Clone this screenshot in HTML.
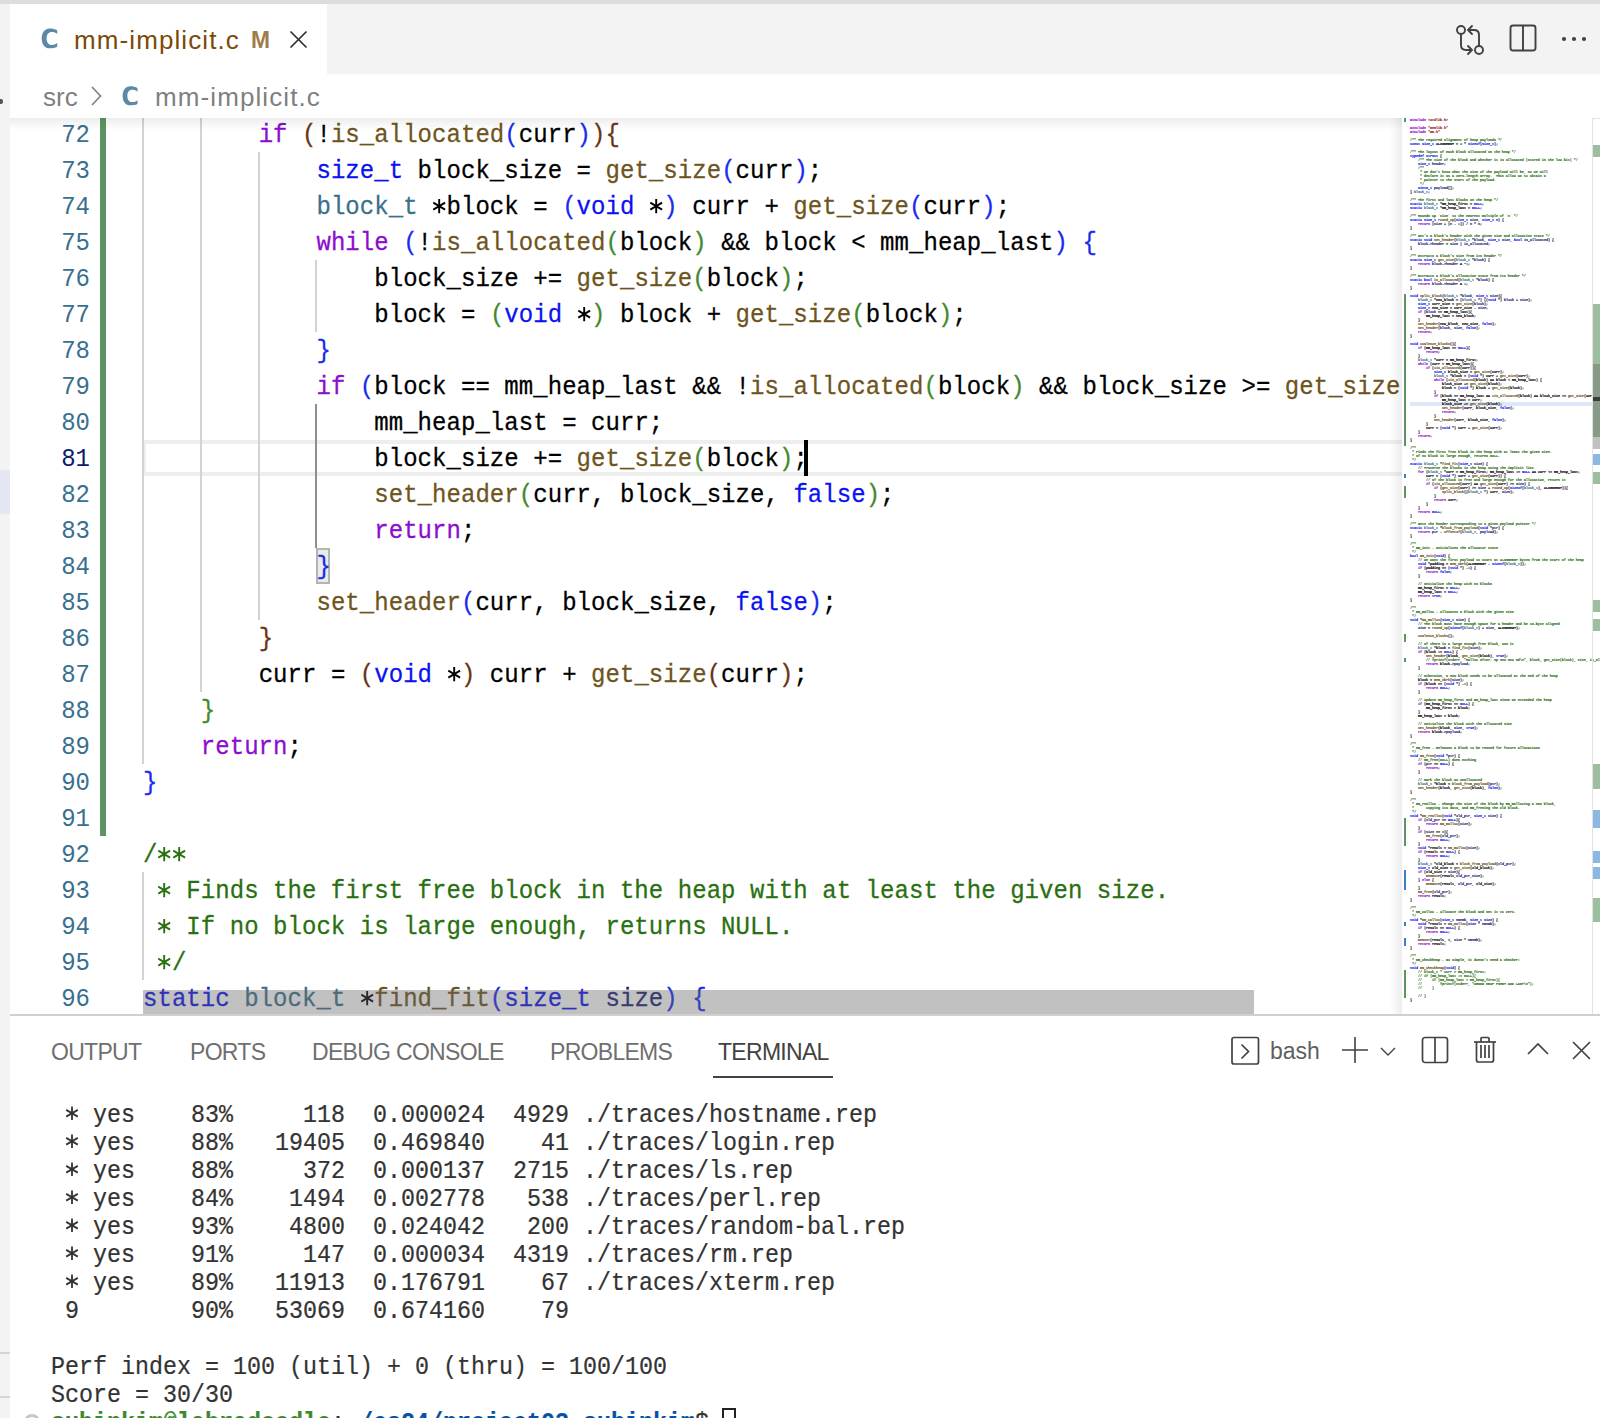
<!DOCTYPE html><html><head><meta charset="utf-8"><style>*{box-sizing:border-box}
html,body{margin:0;padding:0}
body{width:1600px;height:1418px;overflow:hidden;background:#fff;position:relative;font-family:"Liberation Sans",sans-serif}
.a{position:absolute}
#topbar{left:0;top:0;width:1600px;height:4px;background:#dddddd}
#side{left:0;top:4px;width:10px;height:1414px;background:#f3f3f3}
#tabs{left:10px;top:4px;width:1590px;height:70px;background:#f3f3f3}
#tab{left:10px;top:4px;width:317px;height:70px;background:#fff}
#crumb{left:10px;top:74px;width:1590px;height:44px;background:#fff}
#editor{left:10px;top:118px;width:1590px;height:896px;overflow:hidden;background:#fff}
.ln{position:absolute;left:0;width:90px;text-align:right;font-family:"Liberation Mono",monospace;font-size:24px;line-height:36px;height:36px;color:#386f8f;margin-top:2px;transform:scaleY(1.1);transform-origin:0 26px}
.ln.act{color:#0d1a6a}
.cl{position:absolute;left:143px;white-space:pre;font-family:"Liberation Mono",monospace;font-size:24px;line-height:36px;height:36px;color:#000;letter-spacing:0.05px;margin-top:2px;transform:scaleY(1.07);transform-origin:0 26px;-webkit-text-stroke:0.25px currentColor}
.mml{position:absolute;left:1410px;white-space:pre;font-family:"Liberation Mono",monospace;font-size:3.3333px;line-height:4px;height:4px;font-weight:bold;-webkit-text-stroke:0.12px currentColor}
.guide{position:absolute;width:2px;background:#d3d3d3}
#panelborder{left:10px;top:1014px;width:1590px;height:2px;background:#d0d0d0}
.ptab{position:absolute;top:1038px;font-size:23px;line-height:28px;color:#6f6f6f;letter-spacing:-0.7px}
.term{position:absolute;left:51px;white-space:pre;font-family:"Liberation Mono",monospace;font-size:23.333px;line-height:28px;height:28px;color:#333;transform:scaleY(1.13);transform-origin:0 20px;-webkit-text-stroke:0.2px currentColor}

.ast{display:inline-block;vertical-align:top;width:14.45px;height:36px}
.tast{display:inline-block;vertical-align:top;width:14px;height:28px}
</style></head><body><div id="topbar" class="a"></div>
<div id="side" class="a"></div>
<div class="a" style="left:0;top:470px;width:10px;height:44px;background:#e4e6f1"></div>
<div class="a" style="left:0;top:1352px;width:10px;height:2px;background:#d4d4d4"></div>
<div class="a" style="left:0;top:1396px;width:10px;height:2px;background:#d4d4d4"></div>
<div id="tabs" class="a"></div>
<div id="tab" class="a"></div>
<svg class="a" style="left:40px;top:26px" width="20" height="24" viewBox="40 26 20 24"><path d="M57.2 30.2C55 28.9 52.5 28.4 49.6 28.4C44.8 28.4 41.7 32.6 41.7 38.4C41.7 44.2 44.8 48.3 49.6 48.3C52.5 48.3 55 47.9 57.2 46.8L57.2 43C55.7 44.3 53.8 44.9 51.8 44.9C48.6 44.9 46.6 42.3 46.6 38.4C46.6 34.5 48.6 32.1 51.8 32.1C53.8 32.1 55.7 32.7 57.2 34Z" fill="#5b89a6"/></svg>
<div class="a" style="left:74px;top:25px;font-size:26px;color:#7a4a08;line-height:30px;letter-spacing:1.1px">mm-implicit.c</div>
<div class="a" style="left:251px;top:25px;font-size:24px;font-weight:bold;color:#9f7d4b;line-height:30px;transform:scaleX(0.95);transform-origin:0 0">M</div>
<svg class="a" style="left:289px;top:30px" width="19" height="19" viewBox="0 0 19 19"><path d="M1.5 1.5L17.5 17.5M17.5 1.5L1.5 17.5" stroke="#2e2e2e" stroke-width="1.7" fill="none"/></svg>
<svg class="a" style="left:1450px;top:18px" width="40" height="42" viewBox="0 0 40 42">
<g stroke="#424242" stroke-width="1.9" fill="none" stroke-linecap="round">
<circle cx="11" cy="12" r="4"/><circle cx="29" cy="32" r="4"/>
<path d="M11 16V27Q11 32 16 32H21"/><path d="M18 28L22 32L18 36"/>
<path d="M29 28V17Q29 12 24 12H19"/><path d="M22 8L18 12L22 16"/>
</g></svg>
<svg class="a" style="left:1508px;top:23px" width="30" height="30" viewBox="0 0 30 30"><g stroke="#424242" stroke-width="1.9" fill="none"><rect x="2.5" y="2.5" width="25" height="25" rx="2.5"/><path d="M15 2.5V27.5"/></g></svg>
<svg class="a" style="left:1558px;top:33px" width="32" height="12" viewBox="0 0 32 12"><g fill="#424242"><circle cx="6" cy="6" r="2.1"/><circle cx="16" cy="6" r="2.1"/><circle cx="26" cy="6" r="2.1"/></g></svg>
<div id="crumb" class="a"></div>
<div class="a" style="left:0;top:99px;width:3px;height:5px;background:#555;border-radius:0 2px 2px 0"></div>
<div class="a" style="left:43px;top:82px;font-size:26px;color:#7f7f7f;line-height:30px">src</div>
<svg class="a" style="left:88px;top:84px" width="16" height="24" viewBox="0 0 16 24"><path d="M4 3L12.5 12L4 21" stroke="#7f7f7f" stroke-width="1.6" fill="none"/></svg>
<svg class="a" style="left:121.4px;top:83.5px" width="19.2" height="23" viewBox="40 26 20 24"><path d="M57.2 30.2C55 28.9 52.5 28.4 49.6 28.4C44.8 28.4 41.7 32.6 41.7 38.4C41.7 44.2 44.8 48.3 49.6 48.3C52.5 48.3 55 47.9 57.2 46.8L57.2 43C55.7 44.3 53.8 44.9 51.8 44.9C48.6 44.9 46.6 42.3 46.6 38.4C46.6 34.5 48.6 32.1 51.8 32.1C53.8 32.1 55.7 32.7 57.2 34Z" fill="#5b89a6"/></svg>
<div class="a" style="left:155px;top:82px;font-size:26px;color:#7f7f7f;line-height:30px;letter-spacing:1.1px">mm-implicit.c</div>
<div id="editor" class="a">
<div style="position:absolute;left:-10px;top:-118px;width:1600px;height:1418px">
<div class="a" style="left:100px;top:118px;width:6px;height:718px;background:#5d9461"></div>
<div class="a" style="left:142px;top:440px;width:1270px;height:36px;border:4px solid #eeeeee"></div>
<div class="guide" style="left:142px;top:116px;height:36px;background:#d3d3d3"></div>
<div class="guide" style="left:200px;top:116px;height:36px;background:#d3d3d3"></div>
<div class="guide" style="left:142px;top:152px;height:36px;background:#d3d3d3"></div>
<div class="guide" style="left:200px;top:152px;height:36px;background:#d3d3d3"></div>
<div class="guide" style="left:258px;top:152px;height:36px;background:#d3d3d3"></div>
<div class="guide" style="left:142px;top:188px;height:36px;background:#d3d3d3"></div>
<div class="guide" style="left:200px;top:188px;height:36px;background:#d3d3d3"></div>
<div class="guide" style="left:258px;top:188px;height:36px;background:#d3d3d3"></div>
<div class="guide" style="left:142px;top:224px;height:36px;background:#d3d3d3"></div>
<div class="guide" style="left:200px;top:224px;height:36px;background:#d3d3d3"></div>
<div class="guide" style="left:258px;top:224px;height:36px;background:#d3d3d3"></div>
<div class="guide" style="left:142px;top:260px;height:36px;background:#d3d3d3"></div>
<div class="guide" style="left:200px;top:260px;height:36px;background:#d3d3d3"></div>
<div class="guide" style="left:258px;top:260px;height:36px;background:#d3d3d3"></div>
<div class="guide" style="left:315px;top:260px;height:36px;background:#d3d3d3"></div>
<div class="guide" style="left:142px;top:296px;height:36px;background:#d3d3d3"></div>
<div class="guide" style="left:200px;top:296px;height:36px;background:#d3d3d3"></div>
<div class="guide" style="left:258px;top:296px;height:36px;background:#d3d3d3"></div>
<div class="guide" style="left:315px;top:296px;height:36px;background:#d3d3d3"></div>
<div class="guide" style="left:142px;top:332px;height:36px;background:#d3d3d3"></div>
<div class="guide" style="left:200px;top:332px;height:36px;background:#d3d3d3"></div>
<div class="guide" style="left:258px;top:332px;height:36px;background:#d3d3d3"></div>
<div class="guide" style="left:142px;top:368px;height:36px;background:#d3d3d3"></div>
<div class="guide" style="left:200px;top:368px;height:36px;background:#d3d3d3"></div>
<div class="guide" style="left:258px;top:368px;height:36px;background:#d3d3d3"></div>
<div class="guide" style="left:142px;top:404px;height:36px;background:#d3d3d3"></div>
<div class="guide" style="left:200px;top:404px;height:36px;background:#d3d3d3"></div>
<div class="guide" style="left:258px;top:404px;height:36px;background:#d3d3d3"></div>
<div class="guide" style="left:315px;top:404px;height:36px;background:#8f8f8f"></div>
<div class="guide" style="left:142px;top:440px;height:36px;background:#d3d3d3"></div>
<div class="guide" style="left:200px;top:440px;height:36px;background:#d3d3d3"></div>
<div class="guide" style="left:258px;top:440px;height:36px;background:#d3d3d3"></div>
<div class="guide" style="left:315px;top:440px;height:36px;background:#8f8f8f"></div>
<div class="guide" style="left:142px;top:476px;height:36px;background:#d3d3d3"></div>
<div class="guide" style="left:200px;top:476px;height:36px;background:#d3d3d3"></div>
<div class="guide" style="left:258px;top:476px;height:36px;background:#d3d3d3"></div>
<div class="guide" style="left:315px;top:476px;height:36px;background:#8f8f8f"></div>
<div class="guide" style="left:142px;top:512px;height:36px;background:#d3d3d3"></div>
<div class="guide" style="left:200px;top:512px;height:36px;background:#d3d3d3"></div>
<div class="guide" style="left:258px;top:512px;height:36px;background:#d3d3d3"></div>
<div class="guide" style="left:315px;top:512px;height:36px;background:#8f8f8f"></div>
<div class="guide" style="left:142px;top:548px;height:36px;background:#d3d3d3"></div>
<div class="guide" style="left:200px;top:548px;height:36px;background:#d3d3d3"></div>
<div class="guide" style="left:258px;top:548px;height:36px;background:#d3d3d3"></div>
<div class="guide" style="left:142px;top:584px;height:36px;background:#d3d3d3"></div>
<div class="guide" style="left:200px;top:584px;height:36px;background:#d3d3d3"></div>
<div class="guide" style="left:258px;top:584px;height:36px;background:#d3d3d3"></div>
<div class="guide" style="left:142px;top:620px;height:36px;background:#d3d3d3"></div>
<div class="guide" style="left:200px;top:620px;height:36px;background:#d3d3d3"></div>
<div class="guide" style="left:142px;top:656px;height:36px;background:#d3d3d3"></div>
<div class="guide" style="left:200px;top:656px;height:36px;background:#d3d3d3"></div>
<div class="guide" style="left:142px;top:692px;height:36px;background:#d3d3d3"></div>
<div class="guide" style="left:142px;top:728px;height:36px;background:#d3d3d3"></div>
<div class="guide" style="left:142px;top:872px;height:36px;background:#d3d3d3"></div>
<div class="guide" style="left:142px;top:908px;height:36px;background:#d3d3d3"></div>
<div class="guide" style="left:142px;top:944px;height:36px;background:#d3d3d3"></div>
<div class="a" style="left:316px;top:548px;width:14px;height:36px;border:2px solid #b4b4b4;background:#e8ede5"></div>
<div class="a" style="left:0;top:0;width:1402px;height:1418px;overflow:hidden">
<div class="ln" style="top:116px">72</div>
<div class="cl" style="top:116px">        <span style="color:#8c0ccf">if</span> <span style="color:#6b3214">(</span><span style="color:#000000">!</span><span style="color:#6e5420">is_allocated</span><span style="color:#1a2aee">(</span><span style="color:#000000">curr</span><span style="color:#1a2aee">)</span><span style="color:#6b3214">)</span><span style="color:#6b3214">{</span></div>
<div class="ln" style="top:152px">73</div>
<div class="cl" style="top:152px">            <span style="color:#0b12f2">size_t</span> <span style="color:#000000">block_size</span> <span style="color:#000000">=</span> <span style="color:#6e5420">get_size</span><span style="color:#1a2aee">(</span><span style="color:#000000">curr</span><span style="color:#1a2aee">)</span><span style="color:#000000">;</span></div>
<div class="ln" style="top:188px">74</div>
<div class="cl" style="top:188px">            <span style="color:#3b708c">block_t</span> <svg class="ast" width="14.45" height="36" viewBox="0 0 14.45 36"><path d="M7.2 10.05V23.55M1.3 13.45L13.1 20.15M1.3 20.15L13.1 13.45" stroke="#000000" stroke-width="1.9"/></svg><span style="color:#000000">block</span> <span style="color:#000000">=</span> <span style="color:#1a2aee">(</span><span style="color:#0b12f2">void</span> <svg class="ast" width="14.45" height="36" viewBox="0 0 14.45 36"><path d="M7.2 10.05V23.55M1.3 13.45L13.1 20.15M1.3 20.15L13.1 13.45" stroke="#000000" stroke-width="1.9"/></svg><span style="color:#1a2aee">)</span> <span style="color:#000000">curr</span> <span style="color:#000000">+</span> <span style="color:#6e5420">get_size</span><span style="color:#1a2aee">(</span><span style="color:#000000">curr</span><span style="color:#1a2aee">)</span><span style="color:#000000">;</span></div>
<div class="ln" style="top:224px">75</div>
<div class="cl" style="top:224px">            <span style="color:#8c0ccf">while</span> <span style="color:#1a2aee">(</span><span style="color:#000000">!</span><span style="color:#6e5420">is_allocated</span><span style="color:#3f8a2e">(</span><span style="color:#000000">block</span><span style="color:#3f8a2e">)</span> <span style="color:#000000">&amp;</span><span style="color:#000000">&amp;</span> <span style="color:#000000">block</span> <span style="color:#000000">&lt;</span> <span style="color:#000000">mm_heap_last</span><span style="color:#1a2aee">)</span> <span style="color:#1a2aee">{</span></div>
<div class="ln" style="top:260px">76</div>
<div class="cl" style="top:260px">                <span style="color:#000000">block_size</span> <span style="color:#000000">+</span><span style="color:#000000">=</span> <span style="color:#6e5420">get_size</span><span style="color:#3f8a2e">(</span><span style="color:#000000">block</span><span style="color:#3f8a2e">)</span><span style="color:#000000">;</span></div>
<div class="ln" style="top:296px">77</div>
<div class="cl" style="top:296px">                <span style="color:#000000">block</span> <span style="color:#000000">=</span> <span style="color:#3f8a2e">(</span><span style="color:#0b12f2">void</span> <svg class="ast" width="14.45" height="36" viewBox="0 0 14.45 36"><path d="M7.2 10.05V23.55M1.3 13.45L13.1 20.15M1.3 20.15L13.1 13.45" stroke="#000000" stroke-width="1.9"/></svg><span style="color:#3f8a2e">)</span> <span style="color:#000000">block</span> <span style="color:#000000">+</span> <span style="color:#6e5420">get_size</span><span style="color:#3f8a2e">(</span><span style="color:#000000">block</span><span style="color:#3f8a2e">)</span><span style="color:#000000">;</span></div>
<div class="ln" style="top:332px">78</div>
<div class="cl" style="top:332px">            <span style="color:#1a2aee">}</span></div>
<div class="ln" style="top:368px">79</div>
<div class="cl" style="top:368px">            <span style="color:#8c0ccf">if</span> <span style="color:#1a2aee">(</span><span style="color:#000000">block</span> <span style="color:#000000">=</span><span style="color:#000000">=</span> <span style="color:#000000">mm_heap_last</span> <span style="color:#000000">&amp;</span><span style="color:#000000">&amp;</span> <span style="color:#000000">!</span><span style="color:#6e5420">is_allocated</span><span style="color:#3f8a2e">(</span><span style="color:#000000">block</span><span style="color:#3f8a2e">)</span> <span style="color:#000000">&amp;</span><span style="color:#000000">&amp;</span> <span style="color:#000000">block_size</span> <span style="color:#000000">&gt;</span><span style="color:#000000">=</span> <span style="color:#6e5420">get_size</span><span style="color:#3f8a2e">(</span><span style="color:#000000">curr</span><span style="color:#3f8a2e">)</span><span style="color:#1a2aee">)</span><span style="color:#1a2aee">{</span></div>
<div class="ln" style="top:404px">80</div>
<div class="cl" style="top:404px">                <span style="color:#000000">mm_heap_last</span> <span style="color:#000000">=</span> <span style="color:#000000">curr</span><span style="color:#000000">;</span></div>
<div class="ln act" style="top:440px">81</div>
<div class="cl" style="top:440px">                <span style="color:#000000">block_size</span> <span style="color:#000000">+</span><span style="color:#000000">=</span> <span style="color:#6e5420">get_size</span><span style="color:#3f8a2e">(</span><span style="color:#000000">block</span><span style="color:#3f8a2e">)</span><span style="color:#000000">;</span></div>
<div class="ln" style="top:476px">82</div>
<div class="cl" style="top:476px">                <span style="color:#6e5420">set_header</span><span style="color:#3f8a2e">(</span><span style="color:#000000">curr</span><span style="color:#000000">,</span> <span style="color:#000000">block_size</span><span style="color:#000000">,</span> <span style="color:#0b12f2">false</span><span style="color:#3f8a2e">)</span><span style="color:#000000">;</span></div>
<div class="ln" style="top:512px">83</div>
<div class="cl" style="top:512px">                <span style="color:#8c0ccf">return</span><span style="color:#000000">;</span></div>
<div class="ln" style="top:548px">84</div>
<div class="cl" style="top:548px">            <span style="color:#1a2aee">}</span></div>
<div class="ln" style="top:584px">85</div>
<div class="cl" style="top:584px">            <span style="color:#6e5420">set_header</span><span style="color:#1a2aee">(</span><span style="color:#000000">curr</span><span style="color:#000000">,</span> <span style="color:#000000">block_size</span><span style="color:#000000">,</span> <span style="color:#0b12f2">false</span><span style="color:#1a2aee">)</span><span style="color:#000000">;</span></div>
<div class="ln" style="top:620px">86</div>
<div class="cl" style="top:620px">        <span style="color:#6b3214">}</span></div>
<div class="ln" style="top:656px">87</div>
<div class="cl" style="top:656px">        <span style="color:#000000">curr</span> <span style="color:#000000">=</span> <span style="color:#6b3214">(</span><span style="color:#0b12f2">void</span> <svg class="ast" width="14.45" height="36" viewBox="0 0 14.45 36"><path d="M7.2 10.05V23.55M1.3 13.45L13.1 20.15M1.3 20.15L13.1 13.45" stroke="#000000" stroke-width="1.9"/></svg><span style="color:#6b3214">)</span> <span style="color:#000000">curr</span> <span style="color:#000000">+</span> <span style="color:#6e5420">get_size</span><span style="color:#6b3214">(</span><span style="color:#000000">curr</span><span style="color:#6b3214">)</span><span style="color:#000000">;</span></div>
<div class="ln" style="top:692px">88</div>
<div class="cl" style="top:692px">    <span style="color:#3f8a2e">}</span></div>
<div class="ln" style="top:728px">89</div>
<div class="cl" style="top:728px">    <span style="color:#8c0ccf">return</span><span style="color:#000000">;</span></div>
<div class="ln" style="top:764px">90</div>
<div class="cl" style="top:764px"><span style="color:#1a2aee">}</span></div>
<div class="ln" style="top:800px">91</div>
<div class="cl" style="top:800px"></div>
<div class="ln" style="top:836px">92</div>
<div class="cl" style="top:836px"><span style="color:#2a7010">/</span><svg class="ast" width="14.45" height="36" viewBox="0 0 14.45 36"><path d="M7.2 10.05V23.55M1.3 13.45L13.1 20.15M1.3 20.15L13.1 13.45" stroke="#2a7010" stroke-width="1.9"/></svg><svg class="ast" width="14.45" height="36" viewBox="0 0 14.45 36"><path d="M7.2 10.05V23.55M1.3 13.45L13.1 20.15M1.3 20.15L13.1 13.45" stroke="#2a7010" stroke-width="1.9"/></svg></div>
<div class="ln" style="top:872px">93</div>
<div class="cl" style="top:872px"><span style="color:#2a7010"> </span><svg class="ast" width="14.45" height="36" viewBox="0 0 14.45 36"><path d="M7.2 10.05V23.55M1.3 13.45L13.1 20.15M1.3 20.15L13.1 13.45" stroke="#2a7010" stroke-width="1.9"/></svg><span style="color:#2a7010"> Finds the first free block in the heap with at least the given size.</span></div>
<div class="ln" style="top:908px">94</div>
<div class="cl" style="top:908px"><span style="color:#2a7010"> </span><svg class="ast" width="14.45" height="36" viewBox="0 0 14.45 36"><path d="M7.2 10.05V23.55M1.3 13.45L13.1 20.15M1.3 20.15L13.1 13.45" stroke="#2a7010" stroke-width="1.9"/></svg><span style="color:#2a7010"> If no block is large enough, returns NULL.</span></div>
<div class="ln" style="top:944px">95</div>
<div class="cl" style="top:944px"><span style="color:#2a7010"> </span><svg class="ast" width="14.45" height="36" viewBox="0 0 14.45 36"><path d="M7.2 10.05V23.55M1.3 13.45L13.1 20.15M1.3 20.15L13.1 13.45" stroke="#2a7010" stroke-width="1.9"/></svg><span style="color:#2a7010">/</span></div>
<div class="ln" style="top:980px">96</div>
<div class="cl" style="top:980px"><span style="color:#0b12f2">static</span> <span style="color:#3b708c">block_t</span> <svg class="ast" width="14.45" height="36" viewBox="0 0 14.45 36"><path d="M7.2 10.05V23.55M1.3 13.45L13.1 20.15M1.3 20.15L13.1 13.45" stroke="#000000" stroke-width="1.9"/></svg><span style="color:#6e5420">find_fit</span><span style="color:#1a2aee">(</span><span style="color:#0b12f2">size_t</span> <span style="color:#1b1f78">size</span><span style="color:#1a2aee">)</span> <span style="color:#1a2aee">{</span></div>
</div>
<div class="a" style="left:804px;top:440px;width:4px;height:36px;background:#000"></div>
<div class="a" style="left:143px;top:990px;width:1111px;height:24px;background:rgba(100,100,100,0.4)"></div>
<div class="a" style="left:10px;top:118px;width:1392px;height:12px;background:linear-gradient(to bottom,rgba(0,0,0,0.07),rgba(0,0,0,0))"></div>
<div class="a" style="left:1390px;top:118px;width:12px;height:896px;background:linear-gradient(to right,rgba(0,0,0,0),rgba(0,0,0,0.07))"></div>
<div class="a" style="left:1402px;top:118px;width:190px;height:896px;background:#fff"></div>
<div class="a" style="left:1404px;top:118px;width:2px;height:4px;background:#5d9461"></div>
<div class="a" style="left:1404px;top:294px;width:2px;height:152px;background:#5d9461"></div>
<div class="a" style="left:1404px;top:474px;width:2px;height:4px;background:#3b7fc4"></div>
<div class="a" style="left:1404px;top:486px;width:2px;height:12px;background:#5d9461"></div>
<div class="a" style="left:1404px;top:634px;width:2px;height:8px;background:#5d9461"></div>
<div class="a" style="left:1404px;top:658px;width:2px;height:4px;background:#5d9461"></div>
<div class="a" style="left:1404px;top:818px;width:2px;height:28px;background:#5d9461"></div>
<div class="a" style="left:1404px;top:870px;width:2px;height:20px;background:#3b7fc4"></div>
<div class="a" style="left:1404px;top:922px;width:2px;height:4px;background:#3b7fc4"></div>
<div class="a" style="left:1404px;top:938px;width:2px;height:8px;background:#3b7fc4"></div>
<div class="a" style="left:1404px;top:970px;width:2px;height:28px;background:#5d9461"></div>
<div class="a" style="left:1410px;top:402px;width:182px;height:4px;background:#dde9f8"></div>
<div class="mml" style="top:118px"><span style="color:#8c0ccf">#include</span> <span style="color:#8e2418">&lt;stdlib.h&gt;</span></div>
<div class="mml" style="top:126px"><span style="color:#8c0ccf">#include</span> <span style="color:#8e2418">&quot;memlib.h&quot;</span></div>
<div class="mml" style="top:130px"><span style="color:#8c0ccf">#include</span> <span style="color:#8e2418">&quot;mm.h&quot;</span></div>
<div class="mml" style="top:138px"><span style="color:#2a7010">/** The required alignment of heap payloads */</span></div>
<div class="mml" style="top:142px"><span style="color:#0b12f2">const</span> <span style="color:#0b12f2">size_t</span> <span style="color:#000000">ALIGNMENT</span> <span style="color:#000000">=</span> <span style="color:#2f7a55">2</span> <span style="color:#000000">*</span> <span style="color:#0b12f2">sizeof</span><span style="color:#000000">(</span><span style="color:#0b12f2">size_t</span><span style="color:#000000">)</span><span style="color:#000000">;</span></div>
<div class="mml" style="top:150px"><span style="color:#2a7010">/** The layout of each block allocated on the heap */</span></div>
<div class="mml" style="top:154px"><span style="color:#0b12f2">typedef</span> <span style="color:#0b12f2">struct</span> <span style="color:#000000">{</span></div>
<div class="mml" style="top:158px">    <span style="color:#2a7010">/** The size of the block and whether it is allocated (stored in the low bit) */</span></div>
<div class="mml" style="top:162px">    <span style="color:#0b12f2">size_t</span> <span style="color:#1b1f78">header</span><span style="color:#000000">;</span></div>
<div class="mml" style="top:166px">    <span style="color:#2a7010">/**</span></div>
<div class="mml" style="top:170px"><span style="color:#2a7010">     * We don&#x27;t know what the size of the payload will be, so we will</span></div>
<div class="mml" style="top:174px"><span style="color:#2a7010">     * declare it as a zero-length array.  This allow us to obtain a</span></div>
<div class="mml" style="top:178px"><span style="color:#2a7010">     * pointer to the start of the payload.</span></div>
<div class="mml" style="top:182px"><span style="color:#2a7010">     */</span></div>
<div class="mml" style="top:186px">    <span style="color:#0b12f2">uint8_t</span> <span style="color:#1b1f78">payload</span><span style="color:#000000">[</span><span style="color:#000000">]</span><span style="color:#000000">;</span></div>
<div class="mml" style="top:190px"><span style="color:#000000">}</span> <span style="color:#3b708c">block_t</span><span style="color:#000000">;</span></div>
<div class="mml" style="top:198px"><span style="color:#2a7010">/** The first and last blocks on the heap */</span></div>
<div class="mml" style="top:202px"><span style="color:#0b12f2">static</span> <span style="color:#3b708c">block_t</span> <span style="color:#000000">*</span><span style="color:#000000">mm_heap_first</span> <span style="color:#000000">=</span> <span style="color:#0b12f2">NULL</span><span style="color:#000000">;</span></div>
<div class="mml" style="top:206px"><span style="color:#0b12f2">static</span> <span style="color:#3b708c">block_t</span> <span style="color:#000000">*</span><span style="color:#000000">mm_heap_last</span> <span style="color:#000000">=</span> <span style="color:#0b12f2">NULL</span><span style="color:#000000">;</span></div>
<div class="mml" style="top:214px"><span style="color:#2a7010">/** Rounds up `size` to the nearest multiple of `n` */</span></div>
<div class="mml" style="top:218px"><span style="color:#0b12f2">static</span> <span style="color:#0b12f2">size_t</span> <span style="color:#6e5420">round_up</span><span style="color:#000000">(</span><span style="color:#0b12f2">size_t</span> <span style="color:#1b1f78">size</span><span style="color:#000000">,</span> <span style="color:#0b12f2">size_t</span> <span style="color:#1b1f78">n</span><span style="color:#000000">)</span> <span style="color:#000000">{</span></div>
<div class="mml" style="top:222px">    <span style="color:#8c0ccf">return</span> <span style="color:#000000">(</span><span style="color:#1b1f78">size</span> <span style="color:#000000">+</span> <span style="color:#000000">(</span><span style="color:#1b1f78">n</span> <span style="color:#000000">-</span> <span style="color:#2f7a55">1</span><span style="color:#000000">)</span><span style="color:#000000">)</span> <span style="color:#000000">/</span> <span style="color:#1b1f78">n</span> <span style="color:#000000">*</span> <span style="color:#1b1f78">n</span><span style="color:#000000">;</span></div>
<div class="mml" style="top:226px"><span style="color:#000000">}</span></div>
<div class="mml" style="top:234px"><span style="color:#2a7010">/** Set&#x27;s a block&#x27;s header with the given size and allocation state */</span></div>
<div class="mml" style="top:238px"><span style="color:#0b12f2">static</span> <span style="color:#0b12f2">void</span> <span style="color:#6e5420">set_header</span><span style="color:#000000">(</span><span style="color:#3b708c">block_t</span> <span style="color:#000000">*</span><span style="color:#1b1f78">block</span><span style="color:#000000">,</span> <span style="color:#0b12f2">size_t</span> <span style="color:#1b1f78">size</span><span style="color:#000000">,</span> <span style="color:#0b12f2">bool</span> <span style="color:#1b1f78">is_allocated</span><span style="color:#000000">)</span> <span style="color:#000000">{</span></div>
<div class="mml" style="top:242px">    <span style="color:#1b1f78">block</span><span style="color:#000000">-</span><span style="color:#000000">&gt;</span><span style="color:#1b1f78">header</span> <span style="color:#000000">=</span> <span style="color:#1b1f78">size</span> <span style="color:#000000">|</span> <span style="color:#1b1f78">is_allocated</span><span style="color:#000000">;</span></div>
<div class="mml" style="top:246px"><span style="color:#000000">}</span></div>
<div class="mml" style="top:254px"><span style="color:#2a7010">/** Extracts a block&#x27;s size from its header */</span></div>
<div class="mml" style="top:258px"><span style="color:#0b12f2">static</span> <span style="color:#0b12f2">size_t</span> <span style="color:#6e5420">get_size</span><span style="color:#000000">(</span><span style="color:#3b708c">block_t</span> <span style="color:#000000">*</span><span style="color:#1b1f78">block</span><span style="color:#000000">)</span> <span style="color:#000000">{</span></div>
<div class="mml" style="top:262px">    <span style="color:#8c0ccf">return</span> <span style="color:#1b1f78">block</span><span style="color:#000000">-</span><span style="color:#000000">&gt;</span><span style="color:#1b1f78">header</span> <span style="color:#000000">&amp;</span> <span style="color:#000000">~</span><span style="color:#2f7a55">1</span><span style="color:#000000">;</span></div>
<div class="mml" style="top:266px"><span style="color:#000000">}</span></div>
<div class="mml" style="top:274px"><span style="color:#2a7010">/** Extracts a block&#x27;s allocation state from its header */</span></div>
<div class="mml" style="top:278px"><span style="color:#0b12f2">static</span> <span style="color:#0b12f2">bool</span> <span style="color:#6e5420">is_allocated</span><span style="color:#000000">(</span><span style="color:#3b708c">block_t</span> <span style="color:#000000">*</span><span style="color:#1b1f78">block</span><span style="color:#000000">)</span> <span style="color:#000000">{</span></div>
<div class="mml" style="top:282px">    <span style="color:#8c0ccf">return</span> <span style="color:#1b1f78">block</span><span style="color:#000000">-</span><span style="color:#000000">&gt;</span><span style="color:#1b1f78">header</span> <span style="color:#000000">&amp;</span> <span style="color:#2f7a55">1</span><span style="color:#000000">;</span></div>
<div class="mml" style="top:286px"><span style="color:#000000">}</span></div>
<div class="mml" style="top:294px"><span style="color:#0b12f2">void</span> <span style="color:#6e5420">split_block</span><span style="color:#000000">(</span><span style="color:#3b708c">block_t</span> <span style="color:#000000">*</span><span style="color:#1b1f78">block</span><span style="color:#000000">,</span> <span style="color:#0b12f2">size_t</span> <span style="color:#1b1f78">size</span><span style="color:#000000">)</span><span style="color:#000000">{</span></div>
<div class="mml" style="top:298px">    <span style="color:#3b708c">block_t</span> <span style="color:#000000">*</span><span style="color:#000000">new_block</span> <span style="color:#000000">=</span> <span style="color:#000000">(</span><span style="color:#3b708c">block_t</span> <span style="color:#000000">*</span><span style="color:#000000">)</span> <span style="color:#000000">(</span><span style="color:#000000">(</span><span style="color:#0b12f2">void</span> <span style="color:#000000">*</span><span style="color:#000000">)</span> <span style="color:#1b1f78">block</span> <span style="color:#000000">+</span> <span style="color:#1b1f78">size</span><span style="color:#000000">)</span><span style="color:#000000">;</span></div>
<div class="mml" style="top:302px">    <span style="color:#0b12f2">size_t</span> <span style="color:#000000">curr_size</span> <span style="color:#000000">=</span> <span style="color:#6e5420">get_size</span><span style="color:#000000">(</span><span style="color:#1b1f78">block</span><span style="color:#000000">)</span><span style="color:#000000">;</span></div>
<div class="mml" style="top:306px">    <span style="color:#0b12f2">size_t</span> <span style="color:#000000">new_size</span> <span style="color:#000000">=</span> <span style="color:#000000">curr_size</span> <span style="color:#000000">-</span> <span style="color:#1b1f78">size</span><span style="color:#000000">;</span></div>
<div class="mml" style="top:310px">    <span style="color:#8c0ccf">if</span> <span style="color:#000000">(</span><span style="color:#1b1f78">block</span> <span style="color:#000000">=</span><span style="color:#000000">=</span> <span style="color:#000000">mm_heap_last</span><span style="color:#000000">)</span><span style="color:#000000">{</span></div>
<div class="mml" style="top:314px">        <span style="color:#000000">mm_heap_last</span> <span style="color:#000000">=</span> <span style="color:#000000">new_block</span><span style="color:#000000">;</span></div>
<div class="mml" style="top:318px">    <span style="color:#000000">}</span></div>
<div class="mml" style="top:322px">    <span style="color:#6e5420">set_header</span><span style="color:#000000">(</span><span style="color:#000000">new_block</span><span style="color:#000000">,</span> <span style="color:#000000">new_size</span><span style="color:#000000">,</span> <span style="color:#0b12f2">false</span><span style="color:#000000">)</span><span style="color:#000000">;</span></div>
<div class="mml" style="top:326px">    <span style="color:#6e5420">set_header</span><span style="color:#000000">(</span><span style="color:#1b1f78">block</span><span style="color:#000000">,</span> <span style="color:#1b1f78">size</span><span style="color:#000000">,</span> <span style="color:#0b12f2">false</span><span style="color:#000000">)</span><span style="color:#000000">;</span></div>
<div class="mml" style="top:330px">    <span style="color:#8c0ccf">return</span><span style="color:#000000">;</span></div>
<div class="mml" style="top:334px"><span style="color:#000000">}</span></div>
<div class="mml" style="top:342px"><span style="color:#0b12f2">void</span> <span style="color:#6e5420">coalesce_blocks</span><span style="color:#000000">(</span><span style="color:#000000">)</span><span style="color:#000000">{</span></div>
<div class="mml" style="top:346px">    <span style="color:#8c0ccf">if</span> <span style="color:#000000">(</span><span style="color:#000000">mm_heap_last</span> <span style="color:#000000">=</span><span style="color:#000000">=</span> <span style="color:#0b12f2">NULL</span><span style="color:#000000">)</span><span style="color:#000000">{</span></div>
<div class="mml" style="top:350px">        <span style="color:#8c0ccf">return</span><span style="color:#000000">;</span></div>
<div class="mml" style="top:354px">    <span style="color:#000000">}</span></div>
<div class="mml" style="top:358px">    <span style="color:#3b708c">block_t</span> <span style="color:#000000">*</span><span style="color:#000000">curr</span> <span style="color:#000000">=</span> <span style="color:#000000">mm_heap_first</span><span style="color:#000000">;</span></div>
<div class="mml" style="top:362px">    <span style="color:#8c0ccf">while</span> <span style="color:#000000">(</span><span style="color:#000000">curr</span> <span style="color:#000000">&lt;</span> <span style="color:#000000">mm_heap_last</span><span style="color:#000000">)</span><span style="color:#000000">{</span></div>
<div class="mml" style="top:366px">        <span style="color:#8c0ccf">if</span> <span style="color:#000000">(</span><span style="color:#000000">!</span><span style="color:#6e5420">is_allocated</span><span style="color:#000000">(</span><span style="color:#000000">curr</span><span style="color:#000000">)</span><span style="color:#000000">)</span><span style="color:#000000">{</span></div>
<div class="mml" style="top:370px">            <span style="color:#0b12f2">size_t</span> <span style="color:#000000">block_size</span> <span style="color:#000000">=</span> <span style="color:#6e5420">get_size</span><span style="color:#000000">(</span><span style="color:#000000">curr</span><span style="color:#000000">)</span><span style="color:#000000">;</span></div>
<div class="mml" style="top:374px">            <span style="color:#3b708c">block_t</span> <span style="color:#000000">*</span><span style="color:#000000">block</span> <span style="color:#000000">=</span> <span style="color:#000000">(</span><span style="color:#0b12f2">void</span> <span style="color:#000000">*</span><span style="color:#000000">)</span> <span style="color:#000000">curr</span> <span style="color:#000000">+</span> <span style="color:#6e5420">get_size</span><span style="color:#000000">(</span><span style="color:#000000">curr</span><span style="color:#000000">)</span><span style="color:#000000">;</span></div>
<div class="mml" style="top:378px">            <span style="color:#8c0ccf">while</span> <span style="color:#000000">(</span><span style="color:#000000">!</span><span style="color:#6e5420">is_allocated</span><span style="color:#000000">(</span><span style="color:#000000">block</span><span style="color:#000000">)</span> <span style="color:#000000">&amp;</span><span style="color:#000000">&amp;</span> <span style="color:#000000">block</span> <span style="color:#000000">&lt;</span> <span style="color:#000000">mm_heap_last</span><span style="color:#000000">)</span> <span style="color:#000000">{</span></div>
<div class="mml" style="top:382px">                <span style="color:#000000">block_size</span> <span style="color:#000000">+</span><span style="color:#000000">=</span> <span style="color:#6e5420">get_size</span><span style="color:#000000">(</span><span style="color:#000000">block</span><span style="color:#000000">)</span><span style="color:#000000">;</span></div>
<div class="mml" style="top:386px">                <span style="color:#000000">block</span> <span style="color:#000000">=</span> <span style="color:#000000">(</span><span style="color:#0b12f2">void</span> <span style="color:#000000">*</span><span style="color:#000000">)</span> <span style="color:#000000">block</span> <span style="color:#000000">+</span> <span style="color:#6e5420">get_size</span><span style="color:#000000">(</span><span style="color:#000000">block</span><span style="color:#000000">)</span><span style="color:#000000">;</span></div>
<div class="mml" style="top:390px">            <span style="color:#000000">}</span></div>
<div class="mml" style="top:394px">            <span style="color:#8c0ccf">if</span> <span style="color:#000000">(</span><span style="color:#000000">block</span> <span style="color:#000000">=</span><span style="color:#000000">=</span> <span style="color:#000000">mm_heap_last</span> <span style="color:#000000">&amp;</span><span style="color:#000000">&amp;</span> <span style="color:#000000">!</span><span style="color:#6e5420">is_allocated</span><span style="color:#000000">(</span><span style="color:#000000">block</span><span style="color:#000000">)</span> <span style="color:#000000">&amp;</span><span style="color:#000000">&amp;</span> <span style="color:#000000">block_size</span> <span style="color:#000000">&gt;</span><span style="color:#000000">=</span> <span style="color:#6e5420">get_size</span><span style="color:#000000">(</span><span style="color:#000000">curr</span><span style="color:#000000">)</span><span style="color:#000000">)</span><span style="color:#000000">{</span></div>
<div class="mml" style="top:398px">                <span style="color:#000000">mm_heap_last</span> <span style="color:#000000">=</span> <span style="color:#000000">curr</span><span style="color:#000000">;</span></div>
<div class="mml" style="top:402px">                <span style="color:#000000">block_size</span> <span style="color:#000000">+</span><span style="color:#000000">=</span> <span style="color:#6e5420">get_size</span><span style="color:#000000">(</span><span style="color:#000000">block</span><span style="color:#000000">)</span><span style="color:#000000">;</span></div>
<div class="mml" style="top:406px">                <span style="color:#6e5420">set_header</span><span style="color:#000000">(</span><span style="color:#000000">curr</span><span style="color:#000000">,</span> <span style="color:#000000">block_size</span><span style="color:#000000">,</span> <span style="color:#0b12f2">false</span><span style="color:#000000">)</span><span style="color:#000000">;</span></div>
<div class="mml" style="top:410px">                <span style="color:#8c0ccf">return</span><span style="color:#000000">;</span></div>
<div class="mml" style="top:414px">            <span style="color:#000000">}</span></div>
<div class="mml" style="top:418px">            <span style="color:#6e5420">set_header</span><span style="color:#000000">(</span><span style="color:#000000">curr</span><span style="color:#000000">,</span> <span style="color:#000000">block_size</span><span style="color:#000000">,</span> <span style="color:#0b12f2">false</span><span style="color:#000000">)</span><span style="color:#000000">;</span></div>
<div class="mml" style="top:422px">        <span style="color:#000000">}</span></div>
<div class="mml" style="top:426px">        <span style="color:#000000">curr</span> <span style="color:#000000">=</span> <span style="color:#000000">(</span><span style="color:#0b12f2">void</span> <span style="color:#000000">*</span><span style="color:#000000">)</span> <span style="color:#000000">curr</span> <span style="color:#000000">+</span> <span style="color:#6e5420">get_size</span><span style="color:#000000">(</span><span style="color:#000000">curr</span><span style="color:#000000">)</span><span style="color:#000000">;</span></div>
<div class="mml" style="top:430px">    <span style="color:#000000">}</span></div>
<div class="mml" style="top:434px">    <span style="color:#8c0ccf">return</span><span style="color:#000000">;</span></div>
<div class="mml" style="top:438px"><span style="color:#000000">}</span></div>
<div class="mml" style="top:446px"><span style="color:#2a7010">/**</span></div>
<div class="mml" style="top:450px"><span style="color:#2a7010"> * Finds the first free block in the heap with at least the given size.</span></div>
<div class="mml" style="top:454px"><span style="color:#2a7010"> * If no block is large enough, returns NULL.</span></div>
<div class="mml" style="top:458px"><span style="color:#2a7010"> */</span></div>
<div class="mml" style="top:462px"><span style="color:#0b12f2">static</span> <span style="color:#3b708c">block_t</span> <span style="color:#000000">*</span><span style="color:#6e5420">find_fit</span><span style="color:#000000">(</span><span style="color:#0b12f2">size_t</span> <span style="color:#1b1f78">size</span><span style="color:#000000">)</span> <span style="color:#000000">{</span></div>
<div class="mml" style="top:466px">    <span style="color:#2a7010">// Traverse the blocks in the heap using the implicit list</span></div>
<div class="mml" style="top:470px">    <span style="color:#8c0ccf">for</span> <span style="color:#000000">(</span><span style="color:#3b708c">block_t</span> <span style="color:#000000">*</span><span style="color:#000000">curr</span> <span style="color:#000000">=</span> <span style="color:#000000">mm_heap_first</span><span style="color:#000000">;</span> <span style="color:#000000">mm_heap_last</span> <span style="color:#000000">!</span><span style="color:#000000">=</span> <span style="color:#0b12f2">NULL</span> <span style="color:#000000">&amp;</span><span style="color:#000000">&amp;</span> <span style="color:#000000">curr</span> <span style="color:#000000">&lt;</span><span style="color:#000000">=</span> <span style="color:#000000">mm_heap_last</span><span style="color:#000000">;</span></div>
<div class="mml" style="top:474px">        <span style="color:#000000">curr</span> <span style="color:#000000">=</span> <span style="color:#000000">(</span><span style="color:#0b12f2">void</span> <span style="color:#000000">*</span><span style="color:#000000">)</span> <span style="color:#000000">curr</span> <span style="color:#000000">+</span> <span style="color:#6e5420">get_size</span><span style="color:#000000">(</span><span style="color:#000000">curr</span><span style="color:#000000">)</span><span style="color:#000000">)</span> <span style="color:#000000">{</span></div>
<div class="mml" style="top:478px">        <span style="color:#2a7010">// If the block is free and large enough for the allocation, return it</span></div>
<div class="mml" style="top:482px">        <span style="color:#8c0ccf">if</span> <span style="color:#000000">(</span><span style="color:#000000">!</span><span style="color:#6e5420">is_allocated</span><span style="color:#000000">(</span><span style="color:#000000">curr</span><span style="color:#000000">)</span> <span style="color:#000000">&amp;</span><span style="color:#000000">&amp;</span> <span style="color:#6e5420">get_size</span><span style="color:#000000">(</span><span style="color:#000000">curr</span><span style="color:#000000">)</span> <span style="color:#000000">&gt;</span><span style="color:#000000">=</span> <span style="color:#1b1f78">size</span><span style="color:#000000">)</span> <span style="color:#000000">{</span></div>
<div class="mml" style="top:486px">            <span style="color:#8c0ccf">if</span> <span style="color:#000000">(</span><span style="color:#6e5420">get_size</span><span style="color:#000000">(</span><span style="color:#000000">curr</span><span style="color:#000000">)</span> <span style="color:#000000">&gt;</span><span style="color:#000000">=</span> <span style="color:#1b1f78">size</span> <span style="color:#000000">+</span> <span style="color:#6e5420">round_up</span><span style="color:#000000">(</span><span style="color:#0b12f2">sizeof</span><span style="color:#000000">(</span><span style="color:#3b708c">block_t</span><span style="color:#000000">)</span><span style="color:#000000">,</span> <span style="color:#000000">ALIGNMENT</span><span style="color:#000000">)</span><span style="color:#000000">)</span><span style="color:#000000">{</span></div>
<div class="mml" style="top:490px">                <span style="color:#6e5420">split_block</span><span style="color:#000000">(</span><span style="color:#000000">(</span><span style="color:#3b708c">block_t</span> <span style="color:#000000">*</span><span style="color:#000000">)</span> <span style="color:#000000">curr</span><span style="color:#000000">,</span> <span style="color:#1b1f78">size</span><span style="color:#000000">)</span><span style="color:#000000">;</span></div>
<div class="mml" style="top:494px">            <span style="color:#000000">}</span></div>
<div class="mml" style="top:498px">            <span style="color:#8c0ccf">return</span> <span style="color:#000000">curr</span><span style="color:#000000">;</span></div>
<div class="mml" style="top:502px">        <span style="color:#000000">}</span></div>
<div class="mml" style="top:506px">    <span style="color:#000000">}</span></div>
<div class="mml" style="top:510px">    <span style="color:#8c0ccf">return</span> <span style="color:#0b12f2">NULL</span><span style="color:#000000">;</span></div>
<div class="mml" style="top:514px"><span style="color:#000000">}</span></div>
<div class="mml" style="top:522px"><span style="color:#2a7010">/** Gets the header corresponding to a given payload pointer */</span></div>
<div class="mml" style="top:526px"><span style="color:#0b12f2">static</span> <span style="color:#3b708c">block_t</span> <span style="color:#000000">*</span><span style="color:#6e5420">block_from_payload</span><span style="color:#000000">(</span><span style="color:#0b12f2">void</span> <span style="color:#000000">*</span><span style="color:#1b1f78">ptr</span><span style="color:#000000">)</span> <span style="color:#000000">{</span></div>
<div class="mml" style="top:530px">    <span style="color:#8c0ccf">return</span> <span style="color:#1b1f78">ptr</span> <span style="color:#000000">-</span> <span style="color:#6e5420">offsetof</span><span style="color:#000000">(</span><span style="color:#3b708c">block_t</span><span style="color:#000000">,</span> <span style="color:#1b1f78">payload</span><span style="color:#000000">)</span><span style="color:#000000">;</span></div>
<div class="mml" style="top:534px"><span style="color:#000000">}</span></div>
<div class="mml" style="top:542px"><span style="color:#2a7010">/**</span></div>
<div class="mml" style="top:546px"><span style="color:#2a7010"> * mm_init - Initializes the allocator state</span></div>
<div class="mml" style="top:550px"><span style="color:#2a7010"> */</span></div>
<div class="mml" style="top:554px"><span style="color:#0b12f2">bool</span> <span style="color:#6e5420">mm_init</span><span style="color:#000000">(</span><span style="color:#0b12f2">void</span><span style="color:#000000">)</span> <span style="color:#000000">{</span></div>
<div class="mml" style="top:558px">    <span style="color:#2a7010">// We want the first payload to start at ALIGNMENT bytes from the start of the heap</span></div>
<div class="mml" style="top:562px">    <span style="color:#0b12f2">void</span> <span style="color:#000000">*</span><span style="color:#000000">padding</span> <span style="color:#000000">=</span> <span style="color:#6e5420">mem_sbrk</span><span style="color:#000000">(</span><span style="color:#000000">ALIGNMENT</span> <span style="color:#000000">-</span> <span style="color:#0b12f2">sizeof</span><span style="color:#000000">(</span><span style="color:#3b708c">block_t</span><span style="color:#000000">)</span><span style="color:#000000">)</span><span style="color:#000000">;</span></div>
<div class="mml" style="top:566px">    <span style="color:#8c0ccf">if</span> <span style="color:#000000">(</span><span style="color:#000000">padding</span> <span style="color:#000000">=</span><span style="color:#000000">=</span> <span style="color:#000000">(</span><span style="color:#0b12f2">void</span> <span style="color:#000000">*</span><span style="color:#000000">)</span> <span style="color:#000000">-</span><span style="color:#2f7a55">1</span><span style="color:#000000">)</span> <span style="color:#000000">{</span></div>
<div class="mml" style="top:570px">        <span style="color:#8c0ccf">return</span> <span style="color:#0b12f2">false</span><span style="color:#000000">;</span></div>
<div class="mml" style="top:574px">    <span style="color:#000000">}</span></div>
<div class="mml" style="top:582px">    <span style="color:#2a7010">// Initialize the heap with no blocks</span></div>
<div class="mml" style="top:586px">    <span style="color:#000000">mm_heap_first</span> <span style="color:#000000">=</span> <span style="color:#0b12f2">NULL</span><span style="color:#000000">;</span></div>
<div class="mml" style="top:590px">    <span style="color:#000000">mm_heap_last</span> <span style="color:#000000">=</span> <span style="color:#0b12f2">NULL</span><span style="color:#000000">;</span></div>
<div class="mml" style="top:594px">    <span style="color:#8c0ccf">return</span> <span style="color:#0b12f2">true</span><span style="color:#000000">;</span></div>
<div class="mml" style="top:598px"><span style="color:#000000">}</span></div>
<div class="mml" style="top:606px"><span style="color:#2a7010">/**</span></div>
<div class="mml" style="top:610px"><span style="color:#2a7010"> * mm_malloc - Allocates a block with the given size</span></div>
<div class="mml" style="top:614px"><span style="color:#2a7010"> */</span></div>
<div class="mml" style="top:618px"><span style="color:#0b12f2">void</span> <span style="color:#000000">*</span><span style="color:#6e5420">mm_malloc</span><span style="color:#000000">(</span><span style="color:#0b12f2">size_t</span> <span style="color:#1b1f78">size</span><span style="color:#000000">)</span> <span style="color:#000000">{</span></div>
<div class="mml" style="top:622px">    <span style="color:#2a7010">// The block must have enough space for a header and be 16-byte aligned</span></div>
<div class="mml" style="top:626px">    <span style="color:#1b1f78">size</span> <span style="color:#000000">=</span> <span style="color:#6e5420">round_up</span><span style="color:#000000">(</span><span style="color:#0b12f2">sizeof</span><span style="color:#000000">(</span><span style="color:#3b708c">block_t</span><span style="color:#000000">)</span> <span style="color:#000000">+</span> <span style="color:#1b1f78">size</span><span style="color:#000000">,</span> <span style="color:#000000">ALIGNMENT</span><span style="color:#000000">)</span><span style="color:#000000">;</span></div>
<div class="mml" style="top:634px">    <span style="color:#6e5420">coalesce_blocks</span><span style="color:#000000">(</span><span style="color:#000000">)</span><span style="color:#000000">;</span></div>
<div class="mml" style="top:642px">    <span style="color:#2a7010">// If there is a large enough free block, use it</span></div>
<div class="mml" style="top:646px">    <span style="color:#3b708c">block_t</span> <span style="color:#000000">*</span><span style="color:#000000">block</span> <span style="color:#000000">=</span> <span style="color:#6e5420">find_fit</span><span style="color:#000000">(</span><span style="color:#1b1f78">size</span><span style="color:#000000">)</span><span style="color:#000000">;</span></div>
<div class="mml" style="top:650px">    <span style="color:#8c0ccf">if</span> <span style="color:#000000">(</span><span style="color:#000000">block</span> <span style="color:#000000">!</span><span style="color:#000000">=</span> <span style="color:#0b12f2">NULL</span><span style="color:#000000">)</span> <span style="color:#000000">{</span></div>
<div class="mml" style="top:654px">        <span style="color:#6e5420">set_header</span><span style="color:#000000">(</span><span style="color:#000000">block</span><span style="color:#000000">,</span> <span style="color:#6e5420">get_size</span><span style="color:#000000">(</span><span style="color:#000000">block</span><span style="color:#000000">)</span><span style="color:#000000">,</span> <span style="color:#0b12f2">true</span><span style="color:#000000">)</span><span style="color:#000000">;</span></div>
<div class="mml" style="top:658px">        <span style="color:#2a7010">// fprintf(stderr, &quot;Malloc after: %p %zu %zu %d\n&quot;, block, get_size(block), size, is_allocated(block));</span></div>
<div class="mml" style="top:662px">        <span style="color:#8c0ccf">return</span> <span style="color:#000000">block</span><span style="color:#000000">-</span><span style="color:#000000">&gt;</span><span style="color:#1b1f78">payload</span><span style="color:#000000">;</span></div>
<div class="mml" style="top:666px">    <span style="color:#000000">}</span></div>
<div class="mml" style="top:674px">    <span style="color:#2a7010">// Otherwise, a new block needs to be allocated at the end of the heap</span></div>
<div class="mml" style="top:678px">    <span style="color:#000000">block</span> <span style="color:#000000">=</span> <span style="color:#6e5420">mem_sbrk</span><span style="color:#000000">(</span><span style="color:#1b1f78">size</span><span style="color:#000000">)</span><span style="color:#000000">;</span></div>
<div class="mml" style="top:682px">    <span style="color:#8c0ccf">if</span> <span style="color:#000000">(</span><span style="color:#000000">block</span> <span style="color:#000000">=</span><span style="color:#000000">=</span> <span style="color:#000000">(</span><span style="color:#0b12f2">void</span> <span style="color:#000000">*</span><span style="color:#000000">)</span> <span style="color:#000000">-</span><span style="color:#2f7a55">1</span><span style="color:#000000">)</span> <span style="color:#000000">{</span></div>
<div class="mml" style="top:686px">        <span style="color:#8c0ccf">return</span> <span style="color:#0b12f2">NULL</span><span style="color:#000000">;</span></div>
<div class="mml" style="top:690px">    <span style="color:#000000">}</span></div>
<div class="mml" style="top:698px">    <span style="color:#2a7010">// Update mm_heap_first and mm_heap_last since we extended the heap</span></div>
<div class="mml" style="top:702px">    <span style="color:#8c0ccf">if</span> <span style="color:#000000">(</span><span style="color:#000000">mm_heap_first</span> <span style="color:#000000">=</span><span style="color:#000000">=</span> <span style="color:#0b12f2">NULL</span><span style="color:#000000">)</span> <span style="color:#000000">{</span></div>
<div class="mml" style="top:706px">        <span style="color:#000000">mm_heap_first</span> <span style="color:#000000">=</span> <span style="color:#000000">block</span><span style="color:#000000">;</span></div>
<div class="mml" style="top:710px">    <span style="color:#000000">}</span></div>
<div class="mml" style="top:714px">    <span style="color:#000000">mm_heap_last</span> <span style="color:#000000">=</span> <span style="color:#000000">block</span><span style="color:#000000">;</span></div>
<div class="mml" style="top:722px">    <span style="color:#2a7010">// Initialize the block with the allocated size</span></div>
<div class="mml" style="top:726px">    <span style="color:#6e5420">set_header</span><span style="color:#000000">(</span><span style="color:#000000">block</span><span style="color:#000000">,</span> <span style="color:#1b1f78">size</span><span style="color:#000000">,</span> <span style="color:#0b12f2">true</span><span style="color:#000000">)</span><span style="color:#000000">;</span></div>
<div class="mml" style="top:730px">    <span style="color:#8c0ccf">return</span> <span style="color:#000000">block</span><span style="color:#000000">-</span><span style="color:#000000">&gt;</span><span style="color:#1b1f78">payload</span><span style="color:#000000">;</span></div>
<div class="mml" style="top:734px"><span style="color:#000000">}</span></div>
<div class="mml" style="top:742px"><span style="color:#2a7010">/**</span></div>
<div class="mml" style="top:746px"><span style="color:#2a7010"> * mm_free - Releases a block to be reused for future allocations</span></div>
<div class="mml" style="top:750px"><span style="color:#2a7010"> */</span></div>
<div class="mml" style="top:754px"><span style="color:#0b12f2">void</span> <span style="color:#6e5420">mm_free</span><span style="color:#000000">(</span><span style="color:#0b12f2">void</span> <span style="color:#000000">*</span><span style="color:#1b1f78">ptr</span><span style="color:#000000">)</span> <span style="color:#000000">{</span></div>
<div class="mml" style="top:758px">    <span style="color:#2a7010">// mm_free(NULL) does nothing</span></div>
<div class="mml" style="top:762px">    <span style="color:#8c0ccf">if</span> <span style="color:#000000">(</span><span style="color:#1b1f78">ptr</span> <span style="color:#000000">=</span><span style="color:#000000">=</span> <span style="color:#0b12f2">NULL</span><span style="color:#000000">)</span> <span style="color:#000000">{</span></div>
<div class="mml" style="top:766px">        <span style="color:#8c0ccf">return</span><span style="color:#000000">;</span></div>
<div class="mml" style="top:770px">    <span style="color:#000000">}</span></div>
<div class="mml" style="top:778px">    <span style="color:#2a7010">// Mark the block as unallocated</span></div>
<div class="mml" style="top:782px">    <span style="color:#3b708c">block_t</span> <span style="color:#000000">*</span><span style="color:#000000">block</span> <span style="color:#000000">=</span> <span style="color:#6e5420">block_from_payload</span><span style="color:#000000">(</span><span style="color:#1b1f78">ptr</span><span style="color:#000000">)</span><span style="color:#000000">;</span></div>
<div class="mml" style="top:786px">    <span style="color:#6e5420">set_header</span><span style="color:#000000">(</span><span style="color:#000000">block</span><span style="color:#000000">,</span> <span style="color:#6e5420">get_size</span><span style="color:#000000">(</span><span style="color:#000000">block</span><span style="color:#000000">)</span><span style="color:#000000">,</span> <span style="color:#0b12f2">false</span><span style="color:#000000">)</span><span style="color:#000000">;</span></div>
<div class="mml" style="top:790px"><span style="color:#000000">}</span></div>
<div class="mml" style="top:798px"><span style="color:#2a7010">/**</span></div>
<div class="mml" style="top:802px"><span style="color:#2a7010"> * mm_realloc - Change the size of the block by mm_mallocing a new block,</span></div>
<div class="mml" style="top:806px"><span style="color:#2a7010"> *      copying its data, and mm_freeing the old block.</span></div>
<div class="mml" style="top:810px"><span style="color:#2a7010"> */</span></div>
<div class="mml" style="top:814px"><span style="color:#0b12f2">void</span> <span style="color:#000000">*</span><span style="color:#6e5420">mm_realloc</span><span style="color:#000000">(</span><span style="color:#0b12f2">void</span> <span style="color:#000000">*</span><span style="color:#1b1f78">old_ptr</span><span style="color:#000000">,</span> <span style="color:#0b12f2">size_t</span> <span style="color:#1b1f78">size</span><span style="color:#000000">)</span> <span style="color:#000000">{</span></div>
<div class="mml" style="top:818px">    <span style="color:#8c0ccf">if</span> <span style="color:#000000">(</span><span style="color:#1b1f78">old_ptr</span> <span style="color:#000000">=</span><span style="color:#000000">=</span> <span style="color:#0b12f2">NULL</span><span style="color:#000000">)</span><span style="color:#000000">{</span></div>
<div class="mml" style="top:822px">        <span style="color:#8c0ccf">return</span> <span style="color:#6e5420">mm_malloc</span><span style="color:#000000">(</span><span style="color:#1b1f78">size</span><span style="color:#000000">)</span><span style="color:#000000">;</span></div>
<div class="mml" style="top:826px">    <span style="color:#000000">}</span></div>
<div class="mml" style="top:830px">    <span style="color:#8c0ccf">if</span> <span style="color:#000000">(</span><span style="color:#1b1f78">size</span> <span style="color:#000000">=</span><span style="color:#000000">=</span> <span style="color:#2f7a55">0</span><span style="color:#000000">)</span><span style="color:#000000">{</span></div>
<div class="mml" style="top:834px">        <span style="color:#6e5420">mm_free</span><span style="color:#000000">(</span><span style="color:#1b1f78">old_ptr</span><span style="color:#000000">)</span><span style="color:#000000">;</span></div>
<div class="mml" style="top:838px">        <span style="color:#8c0ccf">return</span> <span style="color:#0b12f2">NULL</span><span style="color:#000000">;</span></div>
<div class="mml" style="top:842px">    <span style="color:#000000">}</span></div>
<div class="mml" style="top:846px">    <span style="color:#0b12f2">void</span> <span style="color:#000000">*</span><span style="color:#000000">result</span> <span style="color:#000000">=</span> <span style="color:#6e5420">mm_malloc</span><span style="color:#000000">(</span><span style="color:#1b1f78">size</span><span style="color:#000000">)</span><span style="color:#000000">;</span></div>
<div class="mml" style="top:850px">    <span style="color:#8c0ccf">if</span> <span style="color:#000000">(</span><span style="color:#000000">result</span> <span style="color:#000000">=</span><span style="color:#000000">=</span> <span style="color:#0b12f2">NULL</span><span style="color:#000000">)</span> <span style="color:#000000">{</span></div>
<div class="mml" style="top:854px">        <span style="color:#8c0ccf">return</span> <span style="color:#0b12f2">NULL</span><span style="color:#000000">;</span></div>
<div class="mml" style="top:858px">    <span style="color:#000000">}</span></div>
<div class="mml" style="top:862px">    <span style="color:#3b708c">block_t</span> <span style="color:#000000">*</span><span style="color:#000000">old_block</span> <span style="color:#000000">=</span> <span style="color:#6e5420">block_from_payload</span><span style="color:#000000">(</span><span style="color:#1b1f78">old_ptr</span><span style="color:#000000">)</span><span style="color:#000000">;</span></div>
<div class="mml" style="top:866px">    <span style="color:#0b12f2">size_t</span> <span style="color:#000000">old_size</span> <span style="color:#000000">=</span> <span style="color:#6e5420">get_size</span><span style="color:#000000">(</span><span style="color:#000000">old_block</span><span style="color:#000000">)</span><span style="color:#000000">;</span></div>
<div class="mml" style="top:870px">    <span style="color:#8c0ccf">if</span> <span style="color:#000000">(</span><span style="color:#000000">old_size</span> <span style="color:#000000">&gt;</span> <span style="color:#1b1f78">size</span><span style="color:#000000">)</span><span style="color:#000000">{</span></div>
<div class="mml" style="top:874px">        <span style="color:#6e5420">memmove</span><span style="color:#000000">(</span><span style="color:#000000">result</span><span style="color:#000000">,</span><span style="color:#1b1f78">old_ptr</span><span style="color:#000000">,</span><span style="color:#1b1f78">size</span><span style="color:#000000">)</span><span style="color:#000000">;</span></div>
<div class="mml" style="top:878px">    <span style="color:#000000">}</span> <span style="color:#8c0ccf">else</span> <span style="color:#000000">{</span></div>
<div class="mml" style="top:882px">        <span style="color:#6e5420">memmove</span><span style="color:#000000">(</span><span style="color:#000000">result</span><span style="color:#000000">,</span> <span style="color:#1b1f78">old_ptr</span><span style="color:#000000">,</span> <span style="color:#000000">old_size</span><span style="color:#000000">)</span><span style="color:#000000">;</span></div>
<div class="mml" style="top:886px">    <span style="color:#000000">}</span></div>
<div class="mml" style="top:890px">    <span style="color:#6e5420">mm_free</span><span style="color:#000000">(</span><span style="color:#1b1f78">old_ptr</span><span style="color:#000000">)</span><span style="color:#000000">;</span></div>
<div class="mml" style="top:894px">    <span style="color:#8c0ccf">return</span> <span style="color:#000000">result</span><span style="color:#000000">;</span></div>
<div class="mml" style="top:898px"><span style="color:#000000">}</span></div>
<div class="mml" style="top:906px"><span style="color:#2a7010">/**</span></div>
<div class="mml" style="top:910px"><span style="color:#2a7010"> * mm_calloc - Allocate the block and set it to zero.</span></div>
<div class="mml" style="top:914px"><span style="color:#2a7010"> */</span></div>
<div class="mml" style="top:918px"><span style="color:#0b12f2">void</span> <span style="color:#000000">*</span><span style="color:#6e5420">mm_calloc</span><span style="color:#000000">(</span><span style="color:#0b12f2">size_t</span> <span style="color:#1b1f78">nmemb</span><span style="color:#000000">,</span> <span style="color:#0b12f2">size_t</span> <span style="color:#1b1f78">size</span><span style="color:#000000">)</span> <span style="color:#000000">{</span></div>
<div class="mml" style="top:922px">    <span style="color:#0b12f2">void</span> <span style="color:#000000">*</span><span style="color:#000000">result</span> <span style="color:#000000">=</span> <span style="color:#6e5420">mm_malloc</span><span style="color:#000000">(</span><span style="color:#1b1f78">size</span> <span style="color:#000000">*</span> <span style="color:#1b1f78">nmemb</span><span style="color:#000000">)</span><span style="color:#000000">;</span></div>
<div class="mml" style="top:926px">    <span style="color:#8c0ccf">if</span> <span style="color:#000000">(</span><span style="color:#000000">result</span> <span style="color:#000000">=</span><span style="color:#000000">=</span> <span style="color:#0b12f2">NULL</span><span style="color:#000000">)</span> <span style="color:#000000">{</span></div>
<div class="mml" style="top:930px">        <span style="color:#8c0ccf">return</span> <span style="color:#0b12f2">NULL</span><span style="color:#000000">;</span></div>
<div class="mml" style="top:934px">    <span style="color:#000000">}</span></div>
<div class="mml" style="top:938px">    <span style="color:#6e5420">memset</span><span style="color:#000000">(</span><span style="color:#000000">result</span><span style="color:#000000">,</span> <span style="color:#2f7a55">0</span><span style="color:#000000">,</span> <span style="color:#1b1f78">size</span> <span style="color:#000000">*</span> <span style="color:#1b1f78">nmemb</span><span style="color:#000000">)</span><span style="color:#000000">;</span></div>
<div class="mml" style="top:942px">    <span style="color:#8c0ccf">return</span> <span style="color:#000000">result</span><span style="color:#000000">;</span></div>
<div class="mml" style="top:946px"><span style="color:#000000">}</span></div>
<div class="mml" style="top:954px"><span style="color:#2a7010">/**</span></div>
<div class="mml" style="top:958px"><span style="color:#2a7010"> * mm_checkheap - So simple, it doesn&#x27;t need a checker!</span></div>
<div class="mml" style="top:962px"><span style="color:#2a7010"> */</span></div>
<div class="mml" style="top:966px"><span style="color:#0b12f2">void</span> <span style="color:#6e5420">mm_checkheap</span><span style="color:#000000">(</span><span style="color:#0b12f2">void</span><span style="color:#000000">)</span> <span style="color:#000000">{</span></div>
<div class="mml" style="top:970px">    <span style="color:#2a7010">// block_t * curr = mm_heap_first;</span></div>
<div class="mml" style="top:974px">    <span style="color:#2a7010">// if (mm_heap_last != NULL){</span></div>
<div class="mml" style="top:978px">    <span style="color:#2a7010">//     if (mm_heap_last &lt; mm_heap_first){</span></div>
<div class="mml" style="top:982px">    <span style="color:#2a7010">//         fprintf(stderr, &quot;WRONG HEAP FIRST AND LAST\n&quot;);</span></div>
<div class="mml" style="top:986px">    <span style="color:#2a7010">//     }</span></div>
<div class="mml" style="top:994px">    <span style="color:#2a7010">// }</span></div>
<div class="mml" style="top:998px"><span style="color:#000000">}</span></div>
<div class="a" style="left:1592px;top:118px;width:1px;height:896px;background:#e2e2e2"></div>
<div class="a" style="left:1593px;top:145px;width:7px;height:12px;background:#9dbf9f"></div>
<div class="a" style="left:1593px;top:304px;width:7px;height:133px;background:#9dbf9f"></div>
<div class="a" style="left:1593px;top:454px;width:7px;height:11px;background:#8cb9e2"></div>
<div class="a" style="left:1593px;top:472px;width:7px;height:12px;background:#9dbf9f"></div>
<div class="a" style="left:1593px;top:600px;width:7px;height:12px;background:#9dbf9f"></div>
<div class="a" style="left:1593px;top:619px;width:7px;height:12px;background:#9dbf9f"></div>
<div class="a" style="left:1593px;top:764px;width:7px;height:25px;background:#9dbf9f"></div>
<div class="a" style="left:1593px;top:810px;width:7px;height:18px;background:#8cb9e2"></div>
<div class="a" style="left:1593px;top:851px;width:7px;height:12px;background:#8cb9e2"></div>
<div class="a" style="left:1593px;top:867px;width:7px;height:12px;background:#8cb9e2"></div>
<div class="a" style="left:1593px;top:898px;width:7px;height:24px;background:#9dbf9f"></div>
<div class="a" style="left:1593px;top:364px;width:7px;height:85px;background:rgba(100,100,100,0.4)"></div>
<div class="a" style="left:1592px;top:118px;width:8px;height:1px;background:#e2e2e2"></div>
<div class="a" style="left:1593px;top:397px;width:7px;height:4px;background:#3c3c3c"></div>
</div>
</div>
<div id="panelborder" class="a"></div>
<div class="ptab" style="left:51px">OUTPUT</div>
<div class="ptab" style="left:190px">PORTS</div>
<div class="ptab" style="left:312px">DEBUG CONSOLE</div>
<div class="ptab" style="left:550px">PROBLEMS</div>
<div class="ptab" style="left:718px;color:#424242">TERMINAL</div>
<div class="a" style="left:713px;top:1076px;width:120px;height:2px;background:#424242"></div>
<svg class="a" style="left:1229px;top:1035px" width="32" height="32" viewBox="0 0 32 32"><g stroke="#424242" stroke-width="1.7" fill="none"><rect x="3" y="2.5" width="26.5" height="26.5" rx="2"/><path d="M12.5 9.5L19.5 16.5L12.5 23.5"/></g></svg>
<div class="a" style="left:1270px;top:1037px;font-size:23px;line-height:28px;color:#5f5f5f">bash</div>
<svg class="a" style="left:1340px;top:1035px" width="30" height="30" viewBox="0 0 30 30"><path d="M2 15H28M15 2V28" stroke="#424242" stroke-width="1.6" fill="none"/></svg>
<svg class="a" style="left:1379px;top:1044px" width="18" height="14" viewBox="0 0 18 14"><path d="M2 4L9 11L16 4" stroke="#424242" stroke-width="1.4" fill="none"/></svg>
<svg class="a" style="left:1420px;top:1035px" width="30" height="30" viewBox="0 0 30 30"><g stroke="#424242" stroke-width="1.7" fill="none"><rect x="2.5" y="2.5" width="25" height="25" rx="2.5"/><path d="M15 2.5V27.5"/></g></svg>
<svg class="a" style="left:1472px;top:1035px" width="26" height="30" viewBox="0 0 26 30"><g stroke="#424242" stroke-width="1.7" fill="none"><path d="M2 7H24"/><path d="M9 7V3.5Q9 2.5 10 2.5H16Q17 2.5 17 3.5V7"/><path d="M4.5 7V25Q4.5 27 6.5 27H19.5Q21.5 27 21.5 25V7"/><path d="M9 10V23M13 10V23M17 10V23"/></g></svg>
<svg class="a" style="left:1525px;top:1040px" width="26" height="18" viewBox="0 0 26 18"><path d="M3 14L13 4L23 14" stroke="#424242" stroke-width="1.7" fill="none"/></svg>
<svg class="a" style="left:1571px;top:1040px" width="21" height="21" viewBox="0 0 21 21"><path d="M2 2L19 19M19 2L2 19" stroke="#424242" stroke-width="1.7" fill="none"/></svg>
<div class="term" style="top:1102px"> <svg class="tast" width="14" height="28" viewBox="0 0 14 28"><path d="M7 6.2V18.2M1.2 9.2L12.8 15.2M1.2 15.2L12.8 9.2" stroke="#333" stroke-width="1.8"/></svg> yes    83%     118  0.000024  4929 ./traces/hostname.rep</div>
<div class="term" style="top:1130px"> <svg class="tast" width="14" height="28" viewBox="0 0 14 28"><path d="M7 6.2V18.2M1.2 9.2L12.8 15.2M1.2 15.2L12.8 9.2" stroke="#333" stroke-width="1.8"/></svg> yes    88%   19405  0.469840    41 ./traces/login.rep</div>
<div class="term" style="top:1158px"> <svg class="tast" width="14" height="28" viewBox="0 0 14 28"><path d="M7 6.2V18.2M1.2 9.2L12.8 15.2M1.2 15.2L12.8 9.2" stroke="#333" stroke-width="1.8"/></svg> yes    88%     372  0.000137  2715 ./traces/ls.rep</div>
<div class="term" style="top:1186px"> <svg class="tast" width="14" height="28" viewBox="0 0 14 28"><path d="M7 6.2V18.2M1.2 9.2L12.8 15.2M1.2 15.2L12.8 9.2" stroke="#333" stroke-width="1.8"/></svg> yes    84%    1494  0.002778   538 ./traces/perl.rep</div>
<div class="term" style="top:1214px"> <svg class="tast" width="14" height="28" viewBox="0 0 14 28"><path d="M7 6.2V18.2M1.2 9.2L12.8 15.2M1.2 15.2L12.8 9.2" stroke="#333" stroke-width="1.8"/></svg> yes    93%    4800  0.024042   200 ./traces/random-bal.rep</div>
<div class="term" style="top:1242px"> <svg class="tast" width="14" height="28" viewBox="0 0 14 28"><path d="M7 6.2V18.2M1.2 9.2L12.8 15.2M1.2 15.2L12.8 9.2" stroke="#333" stroke-width="1.8"/></svg> yes    91%     147  0.000034  4319 ./traces/rm.rep</div>
<div class="term" style="top:1270px"> <svg class="tast" width="14" height="28" viewBox="0 0 14 28"><path d="M7 6.2V18.2M1.2 9.2L12.8 15.2M1.2 15.2L12.8 9.2" stroke="#333" stroke-width="1.8"/></svg> yes    89%   11913  0.176791    67 ./traces/xterm.rep</div>
<div class="term" style="top:1298px"> 9        90%   53069  0.674160    79</div>
<div class="term" style="top:1354px">Perf index = 100 (util) + 0 (thru) = 100/100</div>
<div class="term" style="top:1382px">Score = 30/30</div>
<div class="term" style="top:1410px"><b style="color:#3b8a2c">subinkim@labradoodle</b>:<b style="color:#0451a5">~/cs24/project03-subinkim</b>$ </div>
<div class="a" style="left:722px;top:1408px;width:14px;height:24px;border:2px solid #222"></div>
<div class="a" style="left:24px;top:1414px;width:16px;height:16px;border:3px solid #c6c6c6;border-radius:50%"></div>
</body></html>
